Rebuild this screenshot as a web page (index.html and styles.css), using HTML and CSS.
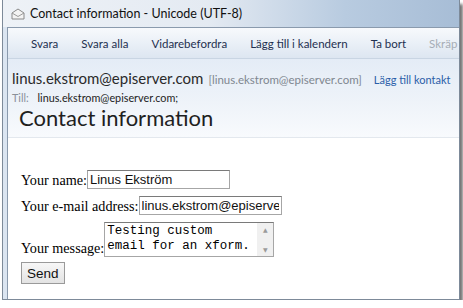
FILE: index.html
```html
<!DOCTYPE html>
<html lang="sv">
<head>
  <meta charset="UTF-8" />
  <title>Contact information - Unicode (UTF-8)</title>
  <link rel="stylesheet" href="styles.css">
</head>
<body>
  <div class="window">
    <div class="titlebar">
      <svg class="mail-icon" width="14" height="12" viewBox="0 0 14 12">
        <path d="M1 5 L7 1 L13 5 V11 H1 Z" fill="#f4f4f4" stroke="#8a8a8a" stroke-width="1"/>
        <path d="M1 5 L7 8.5 L13 5" fill="none" stroke="#9a9a9a" stroke-width="1"/>
      </svg>
      <span class="title">Contact information - Unicode (UTF-8)</span>
    </div>
    <div class="frame">
      <div class="toolbar">
        <span class="tool">Svara</span>
        <span class="tool">Svara alla</span>
        <span class="tool">Vidarebefordra</span>
        <span class="tool">Lägg till i kalendern</span>
        <span class="tool">Ta bort</span>
        <span class="tool disabled">Skräp</span>
      </div>
      <div class="header">
        <div class="from">
          <span class="sender">linus.ekstrom@episerver.com</span>
          <span class="address">[linus.ekstrom@episerver.com]</span>
          <span class="add-contact">Lägg till kontakt</span>
        </div>
        <div class="to"><span class="to-label">Till:</span> linus.ekstrom@episerver.com;</div>
        <div class="subject">Contact information</div>
      </div>
      <div class="body">
        <form class="xform">
          <div class="row">Your name:<input class="field" type="text" value="Linus Ekström"></div>
          <div class="row">Your e-mail address:<input class="field" type="text" value="linus.ekstrom@episerver.com"></div>
          <div class="row row-message">Your message:<div class="message">
              <textarea class="message-text" rows="2">Testing custom
email for an xform.</textarea>
              <div class="scrollbar"><span class="arrow">&#9650;</span><span class="arrow">&#9660;</span></div>
            </div></div>
          <div class="row"><button class="send" type="button">Send</button></div>
        </form>
      </div>
    </div>
  </div>
</body>
</html>
```

FILE: styles.css
```css
* {
  box-sizing: border-box;
}
html, body {
  margin: 0;
  padding: 0;
  background: #ffffff;
}
/* Fönstret med skugga till höger och nedåt */
.window {
  width: 458px;
  height: 300px;
  margin-left: 2px;
  background: #dbe5f1;
  border: 1px solid #7d8a99;
  border-top: none;
  box-shadow: 3px 4px 3px rgba(0, 0, 0, 0.55);
  display: flex;
  flex-direction: column;
  overflow: hidden;
}
.titlebar {
  height: 27px;
  display: flex;
  align-items: center;
  padding-left: 8px;
  gap: 5px;
  background: linear-gradient(90deg, #eef2f7 0%, #e4eaf2 45%, #b8cbe0 75%, #a7bdd6 100%);
  font-family: Lato, "Noto Sans", sans-serif;
  font-size: 12.5px;
  color: #111;
}
.mail-icon {
  flex: none;
}
.frame {
  flex: 1;
  margin: 0 0 0 4px;
  border-left: 1px solid #8a9aad;
  border-top: 1px solid #8a9aad;
  background: #ffffff;
  display: flex;
  flex-direction: column;
}
.toolbar {
  height: 31px;
  display: flex;
  align-items: center;
  padding-left: 23px;
  background: linear-gradient(180deg, #f7f9fc 0%, #eaf0f7 50%, #dde6f1 100%);
  border-bottom: 1px solid #c9d5e3;
  font-family: Lato, "Noto Sans", sans-serif;
  font-size: 11.5px;
  color: #1e3050;
  white-space: nowrap;
}
.tool {
  margin-right: 23px;
}
.disabled {
  color: #a6adb6;
}
.header {
  height: 79px;
  padding: 10px 0 0 4px;
  background: linear-gradient(180deg, #e4ecf6 0%, #eef3f9 55%, #f8fafd 100%);
  border-bottom: 1px solid #e3e8ee;
  font-family: Lato, "Noto Sans", sans-serif;
  white-space: nowrap;
}
.from {
  display: flex;
  align-items: baseline;
  height: 20px;
}
.sender {
  font-size: 15px;
  color: #2a2a2a;
  margin-right: 5px;
}
.address {
  font-size: 11.5px;
  color: #7f8790;
  margin-right: 12px;
}
.add-contact {
  font-size: 11px;
  color: #2b5ea8;
}
.to {
  font-size: 10.8px;
  color: #222;
  margin-top: 2px;
}
.to-label {
  color: #8a9099;
  margin-right: 6px;
}
.subject {
  font-size: 22px;
  color: #1f1f1f;
  padding-left: 7px;
  line-height: 28px;
}
.body {
  flex: 1;
  padding: 32px 0 0 13px;
  font-family: "Liberation Serif", serif;
  font-size: 14.2px;
  color: #000;
}
.row {
  display: flex;
  align-items: flex-end;
  margin-bottom: 7px;
  white-space: nowrap;
}
.row-message {
  margin-bottom: 5px;
}
.field {
  width: 143px;
  height: 19px;
  padding: 0 2px;
  border: 1px solid #a6a6a6;
  border-top-color: #7a7a7a;
  font-family: "Liberation Sans", sans-serif;
  font-size: 13px;
  color: #111;
  outline: none;
}
.message {
  display: flex;
  width: 170px;
  height: 35px;
  border: 1px solid #a6a6a6;
  border-top-color: #7a7a7a;
  background: #fff;
}
.message-text {
  flex: 1;
  border: none;
  padding: 1px 2px;
  font-family: "Liberation Mono", monospace;
  font-size: 12.5px;
  line-height: 15px;
  resize: none;
  overflow: hidden;
  outline: none;
}
.scrollbar {
  width: 16px;
  display: flex;
  flex-direction: column;
  justify-content: space-between;
  align-items: center;
  padding: 3px 0;
  background: #f0f0f0;
}
.arrow {
  font-family: "DejaVu Sans", sans-serif;
  font-size: 6px;
  color: #9a9a9a;
}
.send {
  height: 22px;
  padding: 0 5px;
  border: 1px solid #9a9a9a;
  border-radius: 0;
  background: linear-gradient(180deg, #f7f7f7, #e3e3e3);
  font-family: "Liberation Sans", sans-serif;
  font-size: 13.5px;
  color: #111;
}
```
